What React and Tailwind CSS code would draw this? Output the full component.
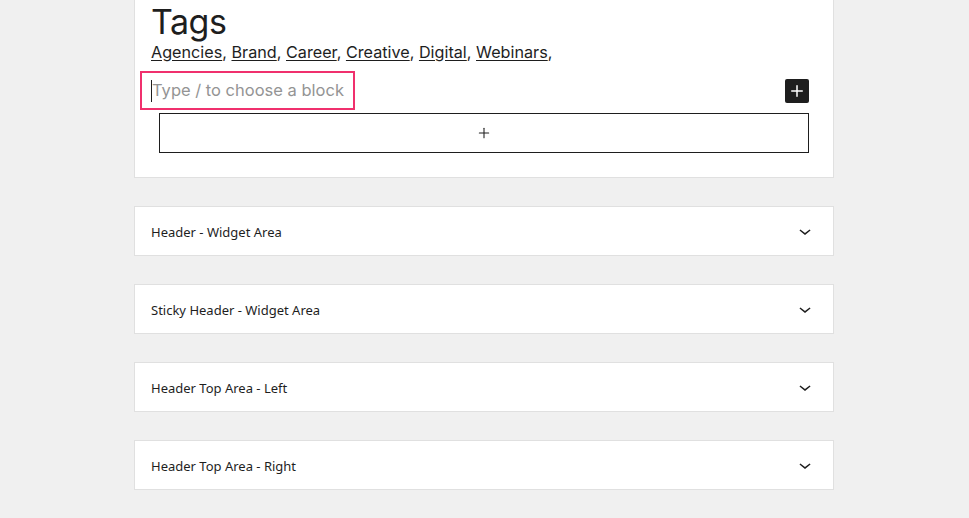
import { Plus } from "lucide-react";

const areas = [
  "Header - Widget Area",
  "Sticky Header - Widget Area",
  "Header Top Area - Left",
  "Header Top Area - Right",
];

const tags = ["Agencies", "Brand", "Career", "Creative", "Digital", "Webinars"];

// WordPress-style chevron
const Chevron = () => (
  <svg width="24" height="24" viewBox="0 0 24 24" fill="#1e1e1e">
    <path d="M17.5 11.6L12 16l-5.5-4.4.9-1.2L12 14l4.6-3.6 1 1.2z" />
  </svg>
);

export default function App() {
  return (
    <div className="min-h-[518px] w-full bg-[#f0f0f0] overflow-hidden">
      <div className="ml-[134px] flex w-[700px] flex-col gap-7 pb-7">
        {/* open widget area */}
        <div className="border border-t-0 border-[#e0e0e0] bg-white pl-4 pr-6 pb-6 pt-0 font-['Inter',sans-serif] text-[#1e1e1e]">
          <h2 className="mt-[2px] text-[34px] leading-[40px] font-normal tracking-[-0.5px]">Tags</h2>
          <div className="-mt-[1px] text-[16.2px] leading-[22px]">
            {tags.map((t) => (
              <span key={t}>
                <a className="underline underline-offset-2">{t}</a>,{" "}
              </span>
            ))}
          </div>
          <div className="mt-[8px] flex items-center justify-between">
            <div className="-ml-[11px] flex h-[39px] items-center border-2 border-[#f0306d] px-[9px]">
              <span className="h-[22px] w-px bg-[#1e1e1e]" />
              <span className="text-[16.5px] text-[#949494]">Type / to choose a block</span>
            </div>
            <button className="flex h-6 w-6 items-center justify-center rounded-[2px] bg-[#1e1e1e] text-white">
              <Plus size={18} strokeWidth={2} />
            </button>
          </div>
          <div className="ml-2 mt-[3px] flex h-10 items-center justify-center border border-[#1e1e1e]">
            <Plus size={16} strokeWidth={1.6} />
          </div>
        </div>

        {areas.map((a) => (
          <div
            key={a}
            className="flex h-[50px] items-center justify-between border border-[#e0e0e0] bg-white pl-4 pr-4 font-['Noto_Sans',sans-serif] text-[13px] text-[#1e1e1e]"
          >
            <span className="pt-[3px]">{a}</span>
            <Chevron />
          </div>
        ))}
      </div>
    </div>
  );
}
